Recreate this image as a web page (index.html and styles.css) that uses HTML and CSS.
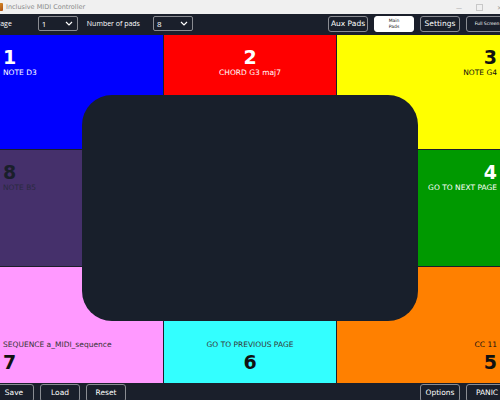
FILE: index.html
```html
<!DOCTYPE html>
<html>
<head>
<meta charset="utf-8">
<link rel="stylesheet" href="styles.css">
</head>
<body>
<div class="app">
  <div class="titlebar">
    <span class="appicon"></span>
    <span class="title">Inclusive MIDI Controller</span>
    <span class="winctl">
      <span class="wc">&#8212;</span>
      <span class="wc sq"></span>
      <span class="wc">&#10005;</span>
    </span>
  </div>
  <div class="toolbar">
    <span class="lbl page-lbl">Page</span>
    <div class="select s1"><span>1</span><svg width="8" height="5" viewBox="0 0 8 5"><polyline points="1,1 4,4 7,1" fill="none" stroke="#fff" stroke-width="1.2"/></svg></div>
    <span class="lbl pads-lbl">Number of pads</span>
    <div class="select s2"><span>8</span><svg width="8" height="5" viewBox="0 0 8 5"><polyline points="1,1 4,4 7,1" fill="none" stroke="#fff" stroke-width="1.2"/></svg></div>
    <div class="spacer"></div>
    <button class="btn">Aux Pads</button>
    <button class="btn active tiny">Main<br>Pads</button>
    <button class="btn">Settings</button>
    <button class="btn tiny fs">Full Screen</button>
  </div>
  <div class="grid">
    <div class="pad top left blue"><div class="num">1</div><div class="label">NOTE D3</div></div>
    <div class="pad top center red"><div class="num">2</div><div class="label">CHORD G3 maj7</div></div>
    <div class="pad top right yellow"><div class="num">3</div><div class="label">NOTE G4</div></div>
    <div class="pad top left purple"><div class="num">8</div><div class="label">NOTE B5</div></div>
    <div class="pad mid"></div>
    <div class="pad top right green"><div class="num">4</div><div class="label">GO TO NEXT PAGE</div></div>
    <div class="pad bottom left pink"><div class="label">SEQUENCE a_MIDI_sequence</div><div class="num">7</div></div>
    <div class="pad bottom center cyan"><div class="label">GO TO PREVIOUS PAGE</div><div class="num">6</div></div>
    <div class="pad bottom right orange"><div class="label">CC 11</div><div class="num">5</div></div>
    <div class="overlay"></div>
  </div>
  <div class="bottombar">
    <button class="btn save">Save</button>
    <button class="btn">Load</button>
    <button class="btn">Reset</button>
    <div class="spacer"></div>
    <button class="btn">Options</button>
    <button class="btn panic">PANIC</button>
  </div>
</div>
</body>
</html>
```
FILE: styles.css
```css
html, body {
  margin: 0;
  padding: 0;
  width: 500px;
  height: 400px;
  overflow: hidden;
  background: #1a1f2b;
  font-family: "DejaVu Sans", Verdana, sans-serif;
}
.app {
  width: 500px;
  height: 400px;
  display: flex;
  flex-direction: column;
  overflow: hidden;
}
.titlebar {
  flex: 0 0 14px;
  height: 14px;
  background: #f0f0f0;
  display: flex;
  align-items: center;
  position: relative;
}
.appicon {
  width: 8px;
  height: 8px;
  margin-left: -5px;
  background: linear-gradient(135deg, #e0a030, #b05010);
  border-radius: 1px;
}
.title {
  margin-left: 3px;
  font-size: 6.5px;
  color: #8a8a8a;
}
.winctl {
  margin-left: auto;
  display: flex;
  align-items: center;
  gap: 14px;
  margin-right: -2px;
}
.wc {
  font-size: 6px;
  color: #a0a0a0;
}
.wc.sq {
  width: 5px;
  height: 5px;
  border: 1px solid #c8c8c8;
}
.toolbar {
  flex: 0 0 21px;
  height: 21px;
  display: flex;
  align-items: center;
  background: #1a1f2b;
  color: #fff;
  font-size: 7.5px;
}
.lbl {
  white-space: nowrap;
  font-family: "Open Sans", "DejaVu Sans", sans-serif;
  font-size: 7px;
  margin-top: -2px;
}
.page-lbl { margin-left: -4px; }
.select {
  height: 15px;
  border: 1px solid #8a8c92;
  border-radius: 2px;
  display: flex;
  align-items: center;
  justify-content: space-between;
  padding: 0 4px 0 3px;
  box-sizing: border-box;
  margin-top: -2px;
  font-family: "Open Sans", "DejaVu Sans", sans-serif;
  font-size: 8px;
}
.s1 { margin-left: 26px; width: 40px; }
.pads-lbl { margin-left: 9px; }
.s2 { margin-left: 13px; width: 40px; }
.spacer { flex: 1; }
.btn {
  height: 16px;
  width: 40px;
  background: #1a1f2b;
  color: #fff;
  border: 1px solid #8a8c92;
  border-radius: 3px;
  font-family: "DejaVu Sans", Verdana, sans-serif;
  font-size: 7.5px;
  padding: 0;
  margin-left: 6px;
  line-height: 1;
  box-sizing: border-box;
}
.toolbar .btn { margin-top: -2px; }
.btn.active {
  background: #fff;
  color: #222;
  border-color: #fff;
}
.btn.tiny { font-size: 4.5px; line-height: 1.2; }
.btn.fs { width: 42px; margin-right: -8px; }
.grid {
  flex: 0 0 auto;
  position: relative;
  display: grid;
  grid-template-columns: 163px 172px 163px;
  grid-template-rows: 114px 116px 116px;
  gap: 1px;
  background: #1a1f2b;
}
.pad {
  display: flex;
  flex-direction: column;
  padding: 0 3px;
  box-sizing: border-box;
}
.pad.top { justify-content: flex-start; padding-top: 11px; }
.pad.bottom { justify-content: flex-end; padding-bottom: 10px; }
.pad.left { align-items: flex-start; }
.pad.center { align-items: center; }
.pad.right { align-items: flex-end; }
.num {
  font-size: 19px;
  font-weight: bold;
  line-height: 22px;
}
.label {
  font-size: 7.5px;
  line-height: 10px;
}
.pad.bottom .label { margin-bottom: 1px; }
.blue { background: #0000ff; color: #fff; }
.red { background: #ff0000; color: #fff; }
.yellow { background: #ffff00; color: #111; }
.purple { background: #45306b; color: #1a1f2b; }
.purple .label { color: #2a2a40; }
.mid { background: #1a1f2b; }
.green { background: #009900; color: #fff; }
.pink { background: #ff99ff; color: #111; }
.pink .label { color: #333; }
.cyan { background: #33ffff; color: #111; }
.cyan .label { color: #333; }
.orange { background: #ff8000; color: #111; }
.overlay {
  position: absolute;
  left: 82px;
  top: 60px;
  width: 336px;
  height: 226px;
  border-radius: 30px;
  background: #181f2b;
}
.bottombar {
  flex: 1 1 auto;
  min-height: 0;
  display: flex;
  align-items: flex-start;
  padding-top: 1px;
  background: #1a1f2b;
}
.bottombar .btn { height: 18px; flex-shrink: 0; }
.btn.save { margin-left: -6px; }
.btn.panic { width: 42px; margin-right: -8px; }
```
